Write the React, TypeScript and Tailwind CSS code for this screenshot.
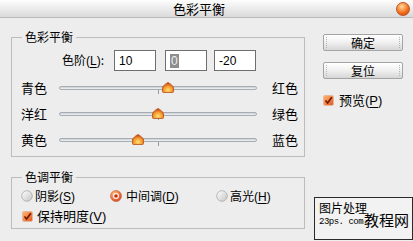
import React from 'react';

const FONT = '"Noto Sans CJK SC", "Liberation Sans", sans-serif';

interface SliderRow {
  left: string;
  right: string;
  value: number;
}

const rows: SliderRow[] = [
  { left: '青色', right: '红色', value: 10 },
  { left: '洋红', right: '绿色', value: 0 },
  { left: '黄色', right: '蓝色', value: -20 },
];

const TRACK = 198;

const Mn: React.FC<{ k: string }> = ({ k }) => (
  <span className="font-['Liberation_Sans']">
    (<span className="underline underline-offset-2">{k}</span>)
  </span>
);

const Thumb: React.FC = () => (
  <svg width="12" height="11" viewBox="0 0 12 11">
    <defs>
      <radialGradient id="tg" cx="0.5" cy="0.75" r="0.7">
        <stop offset="0" stopColor="#ffe27a" />
        <stop offset="0.55" stopColor="#f59a2a" />
        <stop offset="1" stopColor="#c8401a" />
      </radialGradient>
    </defs>
    <path d="M6 0.5 C8 1.5 11.5 4 11.5 6 L11.5 9.5 Q11.5 10.5 10.5 10.5 L1.5 10.5 Q0.5 10.5 0.5 9.5 L0.5 6 C0.5 4 4 1.5 6 0.5Z" fill="url(#tg)" stroke="#b5521c" strokeWidth="0.8" />
  </svg>
);

const Check: React.FC = () => (
  <span className="flex h-[11px] w-[11px] items-center justify-center rounded-[2px] border border-[#e4b89a] bg-gradient-to-br from-[#ffb36b] to-[#e2561e]">
    <svg width="9" height="9" viewBox="0 0 9 9">
      <path d="M1.5 4.5 L3.6 7 L7.8 1.2" fill="none" stroke="#6e1400" strokeWidth="1.6" />
    </svg>
  </span>
);

const Radio: React.FC<{ on?: boolean }> = ({ on }) => (
  <svg width="12" height="12" viewBox="0 0 12 12">
    <defs>
      <radialGradient id="ro" cx="0.35" cy="0.3" r="0.8">
        <stop offset="0" stopColor="#ffc27a" />
        <stop offset="1" stopColor="#d8401a" />
      </radialGradient>
      <linearGradient id="rg" x1="0" y1="0" x2="1" y2="1">
        <stop offset="0" stopColor="#ffffff" />
        <stop offset="1" stopColor="#c4c4c4" />
      </linearGradient>
    </defs>
    {on ? (
      <>
        <circle cx="6" cy="6" r="5.5" fill="url(#ro)" stroke="#c05a30" strokeWidth="0.6" />
        <circle cx="6" cy="6" r="3" fill="#fff4ea" />
        <circle cx="6" cy="6" r="1.8" fill="#d02a10" />
      </>
    ) : (
      <circle cx="6" cy="6" r="5.3" fill="url(#rg)" stroke="#a9a9a9" strokeWidth="0.8" />
    )}
  </svg>
);

const Button: React.FC<{ label: string }> = ({ label }) => (
  <button className="flex h-[17px] w-[80px] items-center justify-between rounded-[2px] border border-[#a4a4a4] bg-gradient-to-b from-[#ffffff] via-[#f0f0f0] to-[#d6d6d6] px-[2px] text-[12px] leading-none text-black">
    <span className="h-[11px] border-l border-dotted border-[#b4b4b4]" />
    <span>{label}</span>
    <span className="h-[11px] border-l border-dotted border-[#b4b4b4]" />
  </button>
);

const App: React.FC = () => {
  return (
    <div
      className="relative flex h-[241px] w-[413px] flex-col overflow-hidden bg-[#ededed] text-[12px] text-black"
      style={{ fontFamily: FONT }}
    >
      {/* title bar */}
      <div className="flex h-[18px] items-center border-b border-[#b9b9b9] bg-gradient-to-b from-[#fdfdfd] to-[#dadada]">
        <div className="flex-1 pl-[10px] text-center text-[13px] leading-none">色彩平衡</div>
        <div className="mr-[3px] ml-[8px] h-[14px] w-[14px] rounded-full border border-[#c0541c] bg-[radial-gradient(circle_at_40%_30%,#ffd9a0,#f2741f_55%,#c4330e)]" />
      </div>

      <div className="flex flex-1">
        {/* left column */}
        <div className="ml-[11px] flex w-[294px] flex-col">
          <fieldset className="mt-[12px] h-[127px] border border-[#bdbdbd] px-0 pt-[6px]">
            <legend className="ml-[10px] px-[3px] text-[12px] leading-[14px]">色彩平衡</legend>
            <div className="flex h-[21px] items-center">
              <span className="ml-[50px] w-[52px]">
                色阶<Mn k="L" />:
              </span>
              <div className="flex h-[21px] w-[42px] items-center border border-[#6f6f6f] bg-white pl-[4px] font-['Liberation_Sans']">10</div>
              <div className="ml-[9px] flex h-[21px] w-[42px] items-center border border-[#6f6f6f] bg-white pl-[4px] font-['Liberation_Sans']">
                <span className="bg-[#8e8e8e] px-[1px] leading-[14px] text-[#eeeeee]">0</span>
              </div>
              <div className="ml-[7px] flex h-[21px] w-[42px] items-center border border-[#6f6f6f] bg-white pl-[4px] font-['Liberation_Sans']">-20</div>
            </div>
            <div className="mt-[4px] flex flex-col">
              {rows.map((r) => (
                <div key={r.left} className="flex h-[26px] items-center">
                  <span className="ml-[9px] w-[38px] text-[13px]">{r.left}</span>
                  <div className="relative h-[4px] w-[198px] rounded-full border border-[#a7adb5] bg-gradient-to-b from-[#c8ccd2] to-[#f4f4f4]">
                    <span className="absolute left-[98px] top-[3px] h-[4px] border-l border-[#9a9a9a]" />
                    <span
                      className="absolute -top-[5px]"
                      style={{ left: (r.value + 100) / 200 * TRACK - 7 }}
                    >
                      <Thumb />
                    </span>
                  </div>
                  <span className="ml-[15px] text-[13px]">{r.right}</span>
                </div>
              ))}
            </div>
          </fieldset>

          <fieldset className="mt-[13px] h-[59px] border border-[#bdbdbd] px-0 pt-[4px]">
            <legend className="ml-[10px] px-[3px] text-[12px] leading-[14px]">色调平衡</legend>
            <div className="flex h-[16px] items-center">
              <div className="ml-[9px] flex w-[89px] items-center gap-[2px]">
                <Radio />
                <span>
                  阴影<Mn k="S" />
                </span>
              </div>
              <div className="flex w-[106px] items-center gap-[4px]">
                <Radio on />
                <span>
                  中间调<Mn k="D" />
                </span>
              </div>
              <div className="flex items-center gap-[2px]">
                <Radio />
                <span>
                  高光<Mn k="H" />
                </span>
              </div>
            </div>
            <div className="mt-[4px] flex h-[16px] items-center gap-[4px] pl-[10px]">
              <Check />
              <span className="text-[13px]">
                保持明度<Mn k="V" />
              </span>
            </div>
          </fieldset>
        </div>

        {/* right column */}
        <div className="ml-[18px] flex flex-col pt-[16px]">
          <Button label="确定" />
          <div className="mt-[11px]">
            <Button label="复位" />
          </div>
          <div className="mt-[13px] flex h-[16px] items-center gap-[5px]">
            <Check />
            <span className="text-[13px]">
              预览<Mn k="P" />
            </span>
          </div>
        </div>
      </div>

      {/* watermark */}
      <div className="absolute left-[314px] top-[197px] h-[43px] w-[99px] whitespace-nowrap border border-[#2a2a2a] bg-[#f2f2f2] pl-[4px] pt-[2px]">
        <div className="text-[12px] leading-[15px]">图片处理</div>
        <div className="flex items-end">
          <span className="font-['Liberation_Mono'] text-[9px] leading-[14px] tracking-[-0.5px]">23ps. com</span>
          <span className="-mt-[8px] ml-[1px] text-[15px] leading-[18px]">教程网</span>
        </div>
      </div>
    </div>
  );
};

export default App;
